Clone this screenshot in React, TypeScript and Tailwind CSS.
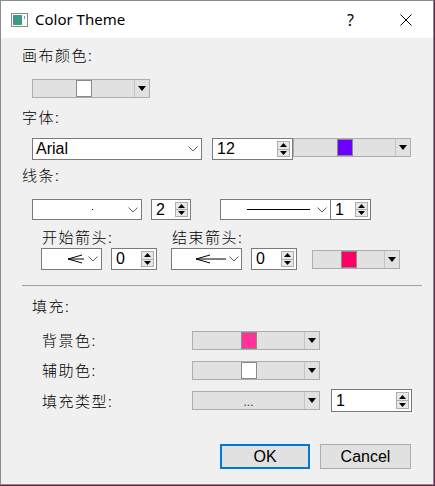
import React from 'react';

const cjk = { fontFamily: '"Noto Sans CJK SC", "Noto Sans", sans-serif' };

const Tri = () => (
  <svg width="8" height="5" viewBox="0 0 8 5">
    <path d="M0 0h8L4 5z" fill="#000" />
  </svg>
);

const Chevron = () => (
  <svg width="10" height="6" viewBox="0 0 10 6">
    <polyline points="0.5,0.5 5,5 9.5,0.5" fill="none" stroke="#606060" strokeWidth="1" />
  </svg>
);

const SpinButtons = () => (
  <div className="my-[2px] mr-[2px] flex w-[13px] flex-col border border-[#adadad] bg-[#e8e8e8]">
    <div className="flex flex-1 items-center justify-center border-b border-[#adadad]">
      <svg width="7" height="4" viewBox="0 0 7 4">
        <path d="M0 4h7L3.5 0z" fill="#000" />
      </svg>
    </div>
    <div className="flex flex-1 items-center justify-center">
      <svg width="7" height="4" viewBox="0 0 7 4">
        <path d="M0 0h7L3.5 4z" fill="#000" />
      </svg>
    </div>
  </div>
);

const Spin = ({ value, className }: { value: string; className: string }) => (
  <div className={`flex border border-[#7a7a7a] bg-white ${className}`}>
    <div className="flex flex-1 items-center pl-[4px] text-[16px] leading-none text-black">{value}</div>
    <SpinButtons />
  </div>
);

const ColorCombo = ({ className, swatch }: { className: string; swatch: string }) => (
  <div className={`flex h-[19px] border border-[#adadad] bg-[#e1e1e1] ${className}`}>
    <div className="flex flex-1 items-center justify-center">
      <div className={`h-[17px] w-[16px] border border-[#8a8a8a] ${swatch}`} />
    </div>
    <div className="flex w-[15px] items-center justify-center border-l border-[#c4c4c4]">
      <Tri />
    </div>
  </div>
);

const TextCombo = ({ className, children }: { className: string; children?: React.ReactNode }) => (
  <div className={`flex items-center border border-[#7a7a7a] bg-white ${className}`}>
    <div className="flex flex-1 items-center">{children}</div>
    <div className="flex w-[17px] items-center justify-center">
      <Chevron />
    </div>
  </div>
);

const ArrowHead = ({ len }: { len: number }) => (
  <svg width={len} height="10" viewBox={`0 0 ${len} 10`}>
    <line x1="0" y1="5" x2="14" y2="1" stroke="#000" strokeWidth="1" />
    <line x1="0" y1="5" x2="14" y2="9" stroke="#000" strokeWidth="1" />
    <line x1="0" y1="5" x2={len} y2="5" stroke="#000" strokeWidth="1" />
  </svg>
);

const Label = ({ children, className = '' }: { children: React.ReactNode; className?: string }) => (
  <div className={`h-5 text-[15px] font-light leading-5 tracking-[1.5px] text-black ${className}`} style={cjk}>
    {children}
  </div>
);

export default function App() {
  return (
    <div className="h-[486px] w-[435px] bg-[#6d1f43]" style={{ fontFamily: '"Liberation Sans", Arial, sans-serif' }}>
      <div className="flex h-[485px] w-[434px] flex-col border border-[#8c8c8c] bg-[#f0f0f0]">
        {/* title bar */}
        <div className="flex h-[37px] items-center bg-white">
          <svg className="ml-[10px]" width="17" height="14" viewBox="0 0 17 14">
            <defs>
              <linearGradient id="ic" x1="0" y1="0" x2="1" y2="1">
                <stop offset="0" stopColor="#3f8fa0" />
                <stop offset="1" stopColor="#3aa66a" />
              </linearGradient>
            </defs>
            <rect x="0.5" y="0.5" width="16" height="13" fill="#fff" stroke="#8a8a8a" />
            <rect x="2" y="2" width="9" height="10" fill="url(#ic)" />
            <rect x="13" y="3" width="1" height="3" fill="#7a9aa0" />
          </svg>
          <span className="ml-[7px] text-[15px] text-black" style={{ fontFamily: '"Noto Sans", sans-serif' }}>
            Color Theme
          </span>
          <span className="ml-auto mr-[46px] text-[16px] text-black" style={{ fontFamily: '"Noto Sans", sans-serif' }}>
            ?
          </span>
          <svg className="mr-[21px]" width="12" height="12" viewBox="0 0 12 12">
            <path d="M0.5 0.5L11.5 11.5M11.5 0.5L0.5 11.5" stroke="#000" strokeWidth="1" />
          </svg>
        </div>

        {/* body */}
        <div className="flex flex-col pl-[21px]">
          <Label className="mt-[7px]">画布颜色:</Label>
          <ColorCombo className="ml-[10px] mt-[14px] w-[118px]" swatch="bg-white" />

          <Label className="mt-[9px]">字体:</Label>
          <div className="ml-[10px] mt-[11px] flex h-[22px]">
            <TextCombo className="w-[170px]">
              <span className="pl-[3px] text-[16px] leading-none text-black">Arial</span>
            </TextCombo>
            <Spin value="12" className="ml-[10px] w-[81px]" />
            <ColorCombo className="h-[19px] w-[118px]" swatch="bg-[#6a00ff]" />
          </div>

          <Label className="mt-[5px]">线条:</Label>
          <div className="ml-[10px] mt-[14px] flex h-[21px]">
            <TextCombo className="w-[110px]">
              <div className="ml-[59px] h-[1px] w-[1px] bg-black" />
            </TextCombo>
            <Spin value="2" className="ml-[9px] w-[40px]" />
            <TextCombo className="ml-[29px] w-[111px]">
              <div className="ml-[26px] h-[1px] w-[63px] bg-black" />
            </TextCombo>
            <Spin value="1" className="w-[40px] border-l-0" />
          </div>

          <div className="mt-[7px] flex">
            <Label className="ml-[20px] w-[130px]">开始箭头:</Label>
            <Label>结束箭头:</Label>
          </div>
          <div className="ml-[19px] mt-[1px] flex h-[22px] items-center">
            <TextCombo className="h-[22px] w-[61px]">
              <div className="ml-[26px] flex">
                <ArrowHead len={16} />
              </div>
            </TextCombo>
            <Spin value="0" className="ml-[9px] h-[22px] w-[46px]" />
            <TextCombo className="ml-[14px] h-[22px] w-[71px]">
              <div className="ml-[24px] flex">
                <ArrowHead len={30} />
              </div>
            </TextCombo>
            <Spin value="0" className="ml-[9px] h-[22px] w-[46px]" />
            <ColorCombo className="ml-[15px] w-[88px]" swatch="bg-[#ff0066]" />
          </div>

          <div className="mr-[11px] mt-[15px] h-[1px] bg-[#a0a0a0]" />

          <Label className="ml-[10px] mt-[10px]">填充:</Label>
          <div className="ml-[20px] mt-[14px] flex items-center">
            <Label className="w-[150px]">背景色:</Label>
            <ColorCombo className="w-[128px]" swatch="bg-[#ff3399]" />
          </div>
          <div className="ml-[20px] mt-[10px] flex items-center">
            <Label className="w-[150px]">辅助色:</Label>
            <ColorCombo className="w-[128px]" swatch="bg-white" />
          </div>
          <div className="ml-[20px] mt-[9px] flex h-[23px] items-center">
            <Label className="w-[150px]">填充类型:</Label>
            <div className="flex h-[19px] w-[128px] border border-[#adadad] bg-[#e1e1e1]">
              <div className="flex flex-1 items-end justify-center pb-[1px] text-[12px] leading-none text-[#333]">...</div>
              <div className="flex w-[15px] items-center justify-center border-l border-[#c4c4c4]">
                <Tri />
              </div>
            </div>
            <Spin value="1" className="ml-[11px] h-[23px] w-[81px]" />
          </div>

          <div className="mt-[32px] flex justify-end gap-[10px] pr-[22px]">
            <button className="h-[25px] w-[90px] border-2 border-[#0078d7] bg-[#e1e1e1] text-[16px] leading-none text-black">
              OK
            </button>
            <button className="h-[25px] w-[91px] border border-[#adadad] bg-[#e1e1e1] text-[16px] leading-none text-black">
              Cancel
            </button>
          </div>
        </div>
      </div>
    </div>
  );
}
